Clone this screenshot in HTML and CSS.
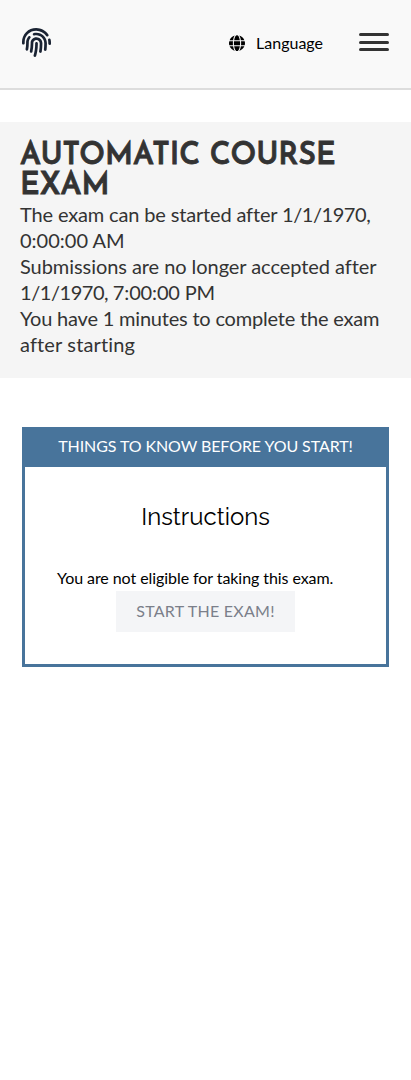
FILE: index.html
```
<!DOCTYPE html>
<html lang="en">
<head>
<meta charset="utf-8">
<title>Automatic Course Exam</title>
<link rel="stylesheet" href="styles.css">
</head>
<body>
<header class="navbar">
  <svg class="logo" viewBox="0 0 512 512" aria-hidden="true"><path d="M256.12 245.96c-13.25 0-24 10.74-24 24 1.14 72.25-8.14 141.9-27.7 211.55-2.73 9.72 2.15 30.49 23.12 30.49 10.48 0 20.11-6.92 23.09-17.52 13.53-47.91 31.04-125.41 29.48-224.52.01-13.25-10.73-24-23.99-24zm-.86-81.73C194 164.16 151.25 211.3 152.1 265.32c.75 47.94-3.75 95.91-13.37 142.55-2.69 12.98 5.67 25.69 18.64 28.36 13.05 2.67 25.67-5.66 28.36-18.64 10.34-50.09 15.17-101.58 14.37-153.02-.41-25.95 19.92-52.49 54.45-52.34 31.31.47 57.15 25.34 57.62 55.47.77 48.05-2.81 96.33-10.61 143.55-2.17 13.06 6.69 25.42 19.76 27.58 19.97 3.33 26.81-15.1 27.58-19.77 8.28-50.03 12.06-101.21 11.27-152.11-.88-55.8-47.94-101.88-104.91-102.72zm-110.69-19.78c-10.3-8.34-25.37-6.8-33.76 3.48-25.62 31.5-39.39 71.28-38.75 112 .59 37.58-2.47 75.27-9.11 112.05-2.34 13.05 6.31 25.53 19.36 27.89 20.11 3.5 27.07-14.81 27.89-19.36 7.19-39.84 10.5-80.66 9.86-121.33-.47-29.88 9.2-57.88 28-80.97 8.35-10.28 6.79-25.39-3.49-33.76zm109.47-62.33c-15.41-.41-30.87 1.44-45.78 4.97-12.89 3.06-20.87 15.98-17.83 28.89 3.06 12.89 16 20.83 28.89 17.83 11.05-2.61 22.47-3.77 34-3.69 75.43 1.13 137.73 61.5 138.88 134.58.59 37.88-1.28 76.11-5.58 113.63-1.5 13.17 7.95 25.08 21.11 26.58 16.72 1.95 25.51-11.88 26.58-21.11a929.06 929.06 0 0 0 5.89-119.85c-1.56-98.75-85.07-180.33-186.16-181.83zm252.07 121.45c-2.86-12.92-15.51-21.2-28.61-18.27-12.94 2.86-21.12 15.66-18.26 28.61 4.71 21.41 4.91 37.41 4.7 61.6-.11 13.27 10.55 24.09 23.8 24.2h.2c13.17 0 23.89-10.61 24-23.8.18-22.18.4-44.11-5.83-72.34zm-40.12-90.72C417.29 43.46 337.6 1.29 252.81.02 183.02-.82 118.47 24.91 70.46 72.94 24.09 119.37-.9 181.04.14 246.65l-.12 21.47c-.39 13.25 10.03 24.31 23.28 24.69.23.02.48.02.72.02 12.92 0 23.59-10.3 23.97-23.3l.16-23.64c-.83-52.5 19.16-101.86 56.28-139 38.76-38.8 91.34-59.67 147.68-58.86 69.45 1.03 134.73 35.56 174.62 92.39 7.61 10.86 22.56 13.45 33.42 5.86 10.84-7.62 13.46-22.59 5.84-33.43z"/></svg>
  <div class="language">
    <svg class="globe" viewBox="0 0 496 512" aria-hidden="true"><path d="M336.5 160C322 70.7 287.8 8 248 8s-74 62.7-88.5 152h177zM152 256c0 22.2 1.2 43.5 3.3 64h185.3c2.1-20.5 3.3-41.8 3.3-64s-1.2-43.5-3.3-64H155.3c-2.1 20.5-3.3 41.8-3.3 64zm324.7-96c-28.6-67.9-86.5-120.4-158-141.6 24.4 33.8 41.2 84.7 50 141.6h108zM177.2 18.4C105.8 39.6 47.8 92.1 19.3 160h108c8.7-56.9 25.5-107.8 49.9-141.6zM487.4 192H372.7c2.1 21 3.3 42.5 3.3 64s-1.2 43-3.3 64h114.6c5.5-20.5 8.6-41.8 8.6-64s-3.1-43.5-8.5-64zM120 256c0-21.5 1.2-43 3.3-64H8.6C3.2 212.5 0 233.8 0 256s3.2 43.5 8.6 64h114.6c-2-21-3.2-42.5-3.2-64zm39.5 96c14.5 89.3 48.7 152 88.5 152s74-62.7 88.5-152h-177zm159.3 141.6c71.4-21.2 129.4-73.7 158-141.6h-108c-8.8 56.9-25.6 107.8-50 141.6zM19.3 352c28.6 67.9 86.5 120.4 157.9 141.6-24.4-33.8-41.1-84.7-49.9-141.6h-108z"/></svg>
    <span>Language</span>
  </div>
  <div class="menu"><span class="bar"></span><span class="bar"></span><span class="bar"></span></div>
</header>
<main>
  <section class="intro">
    <h1 class="title">AUTOMATIC COURSE<br>EXAM</h1>
    <p class="info"><span class="snug">The exam can be started after </span><span class="date">1/1/1970,</span><br>0:00:00 AM</p>
    <p class="info"><span class="even">Submissions are no longer accepted after</span><br><span class="date">1/1/1970, </span><span class="snug">7:00:00 PM</span></p>
    <p class="info"><span class="tight">You have 1 minutes to complete the exam</span><br><span class="loose">after starting</span></p>
  </section>
  <section class="card">
    <div class="card-head">THINGS TO KNOW BEFORE YOU START!</div>
    <div class="card-body">
      <h2 class="subtitle">Instructions</h2>
      <p class="notice">You are not eligible for taking this exam.</p>
      <button class="start" disabled>START THE EXAM!</button>
    </div>
  </section>
</main>
</body>
</html>
```

FILE: styles.css
```
* { box-sizing: border-box; }
body { margin: 0; background: #fff; color: #000; font: 16px/24px Lato, sans-serif; }
.navbar { display: flex; align-items: flex-start; height: 90px; padding: 28px 22px 0; background: #f9f9f9; border-bottom: 2px solid #ddd; }
.logo { width: 29px; height: 29px; fill: #1a2333; }
.language { display: flex; align-items: center; gap: 11px; margin-left: auto; padding-top: 3px; }
.globe { width: 16px; height: 16.5px; }
.menu { display: flex; flex-direction: column; justify-content: space-between; width: 30px; height: 18px; margin: 5px 0 0 36px; }
.bar { height: 3px; border-radius: 2px; background: #333; }
.intro { margin-top: 32px; height: 256px; padding: 19px 20px 0; background: #f5f5f5; color: #333; }
.title { height: 60px; margin: 0; font: 600 30px/28px "Josefin Sans", Lato, sans-serif; -webkit-text-stroke: 0.8px #333; white-space: nowrap; transform: scaleY(1.072); transform-origin: top; }
.info { margin: 0; font-size: 20px; line-height: 26px; white-space: nowrap; }
.snug { letter-spacing: -0.15px; }
.date { letter-spacing: -0.45px; }
.tight { letter-spacing: -0.2px; }
.even { letter-spacing: -0.06px; }
.loose { letter-spacing: 0.15px; }
.card { margin: 49px 22px 0; height: 240px; border: 3px solid #48749b; }
.card-head { height: 37px; line-height: 32px; letter-spacing: -0.09px; text-align: center; color: #fff; background: #48749b; }
.card-body { display: flex; flex-direction: column; align-items: center; padding: 32px; }
.subtitle { margin: 0 0 31px; font: 400 24px/36px Raleway, Lato, sans-serif; }
.notice { align-self: flex-start; margin: 0 0 1px; letter-spacing: -0.07px; white-space: nowrap; }
.start { width: 179px; height: 41px; padding: 0 0 2px; border: 0; background: #f4f5f7; color: #7b7f8a; font: 16px/24px Lato, sans-serif; letter-spacing: 0.25px; }
```
